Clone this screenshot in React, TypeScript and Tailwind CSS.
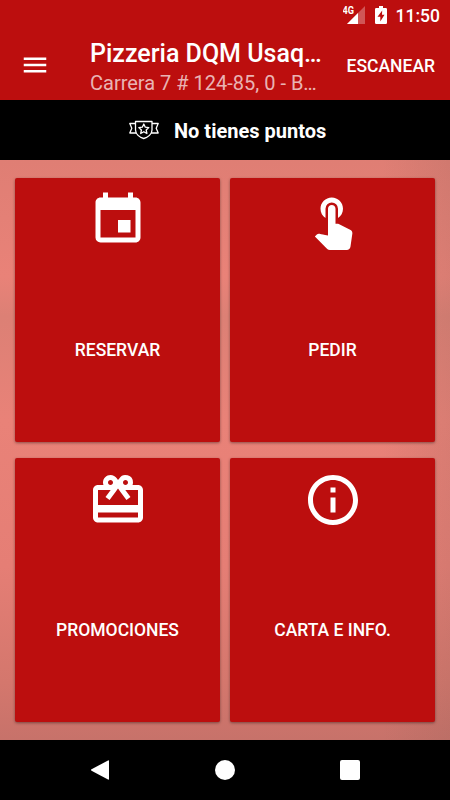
import React from 'react';
import { IconType } from 'react-icons';
import { MdEvent, MdInfoOutline, MdMenu, MdRedeem, MdTouchApp } from 'react-icons/md';

interface MenuCardProps {
  label: string;
  icon: IconType;
}

const menuItems: MenuCardProps[] = [
  { label: 'RESERVAR', icon: MdEvent },
  { label: 'PEDIR', icon: MdTouchApp },
  { label: 'PROMOCIONES', icon: MdRedeem },
  { label: 'CARTA E INFO.', icon: MdInfoOutline },
];

const StatusBar: React.FC = () => (
  <div className="flex h-[30px] items-start justify-end pr-[10px]">
    {/* Mobile signal */}
    <svg className="mt-[5px] h-5 w-[24px]" viewBox="0 0 24 20" fill="#fff">
      <path d="M22 1v18H4z" opacity="0.3" />
      <path d="M15 8v11H4z" />
      <text x="-0.500" y="9" fontSize="10.500" fontWeight="700" fontFamily="Roboto, sans-serif" textLength="11.500" lengthAdjust="spacingAndGlyphs">
        4G
      </text>
    </svg>
    {/* Battery charging */}
    <svg className="mt-[5px] ml-[8px] h-5 w-3" viewBox="0 0 12 20">
      <path d="M4 1h4v2h2.800Q12 3 12 4.200V17.800Q12 19 10.800 19H1.200Q0 19 0 17.800V4.200Q0 3 1.200 3H4z" fill="#fff" />
      <path d="M7.200 5.500L2.500 11.700h2.800v4.800l4.200-6.700H7z" fill="#bc0e0e" />
    </svg>
    <span className="ml-[9px] pt-[4px] text-[17.500px] leading-6 font-medium">11:50</span>
  </div>
);

const AppBar: React.FC = () => (
  <div className="flex h-[70px] items-center pr-[15px] pl-5">
    <MdMenu className="h-[30px] w-[30px] shrink-0" />
    <div className="ml-10 w-[235px] shrink-0 pt-[7px]">
      <h1 className="text-[25px] leading-[30px] font-medium">Pizzeria DQM Usaq…</h1>
      <p className="text-[20px] leading-[29px] text-white/70">Carrera 7 # 124-85, 0 - B…</p>
    </div>
    <button className="ml-auto pt-[2px] text-[17.500px] font-medium">ESCANEAR</button>
  </div>
);

const PointsBadge: React.FC = () => (
  <svg className="h-5 w-[30px]" viewBox="0 0 30 20" fill="none" stroke="#fff" strokeWidth="1.300" strokeLinejoin="round">
    <path d="M6.500 1.500h16.500v8.500c0 4-4 7.500-8.250 8.500-4.250-1-8.250-4.500-8.250-8.500z" />
    <path d="M6.500 3.500H.8l2 4.700-2 4.800h6.500" />
    <path d="M23 3.500h6.200l-2 4.700 2 4.800h-7" />
    <path d="M14.800 4l1.500 3.200 3.500.4-2.600 2.400.7 3.500-3.100-1.800-3.100 1.800.7-3.500L9.800 7.600l3.500-.4z" />
  </svg>
);

const MenuCard: React.FC<MenuCardProps> = ({ label, icon: Icon }) => (
  <button className="flex h-[264px] flex-col items-center rounded-[2px] bg-[#bc0e0e] pt-3 shadow-[0_1px_3px_rgba(0,0,0,0.4)]">
    <Icon className="h-[60px] w-[60px]" />
    <span className="mt-[88px] text-[17.500px] leading-6 font-medium">{label}</span>
  </button>
);

const NavigationBar: React.FC = () => (
  <nav className="flex h-[60px] items-center justify-center gap-[105px] bg-black">
    <svg className="h-5 w-5" viewBox="0 0 20 20" fill="#fff">
      <path d="M18 0.500Q19 0 19 1v18q0 1-1 .5L1.500 10.700Q.5 10 1.500 9.300z" />
    </svg>
    <span className="h-5 w-5 rounded-full bg-white" />
    <span className="h-5 w-5 rounded-[2px] bg-white" />
  </nav>
);

export default function App() {
  return (
    <div className="flex h-[800px] w-[450px] flex-col overflow-hidden font-['Roboto',sans-serif] text-white">
      <header className="bg-[#bc0e0e]">
        <StatusBar />
        <AppBar />
      </header>
      <div className="flex h-[60px] items-center bg-black pl-[129px]">
        <PointsBadge />
        <span className="ml-[15px] pt-[2px] text-[20px] font-bold">No tienes puntos</span>
      </div>
      <main className="grid flex-1 grid-cols-2 content-start gap-x-[10px] gap-y-4 bg-[linear-gradient(90deg,transparent_85%,rgba(120,90,80,0.14)_100%),linear-gradient(180deg,#df7e74_0%,#e98278_20%,#dc8075_27%,#e98278_45%,#e57e75_70%,#d4776d_90%,#c7726a_100%)] px-[15px] pt-[18px]">
        {menuItems.map((item) => (
          <MenuCard key={item.label} {...item} />
        ))}
      </main>
      <NavigationBar />
    </div>
  );
}
